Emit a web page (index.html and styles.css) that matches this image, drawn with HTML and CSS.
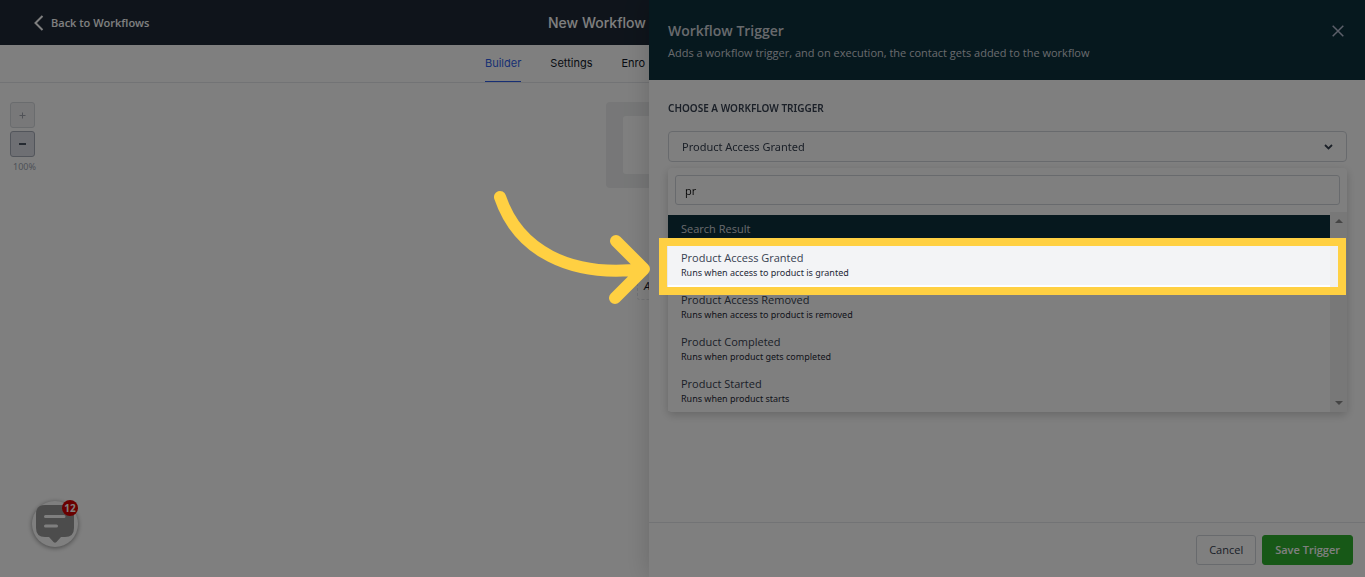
FILE: index.html
```
<!DOCTYPE html>
<html lang="en">
<head>
<meta charset="utf-8">
<title>New Workflow</title>
<link rel="stylesheet" href="styles.css">
</head>
<body>
<div class="app">
  <header class="topbar">
    <a class="back" href="#">
      <svg width="10" height="16" viewBox="0 0 10 16" aria-hidden="true"><path d="M8.500 1 L1.500 8 L8.500 15" fill="none" stroke="currentColor" stroke-width="2"/></svg>
      Back to Workflows
    </a>
    <h1 class="flow-title">New Workflow</h1>
  </header>
  <nav class="tabs">
    <div class="tab-row">
      <a class="tab active" href="#">Builder</a>
      <a class="tab" href="#">Settings</a>
      <a class="tab" href="#">Enro</a>
    </div>
  </nav>
  <main class="canvas">
    <div class="zoom">
      <button class="zoom-btn muted" aria-label="Zoom in"><svg width="7" height="7" viewBox="0 0 7 7"><path d="M3.500 0.500V6.500M0.500 3.500H6.500" stroke="currentColor" fill="none"/></svg></button>
      <button class="zoom-btn" aria-label="Zoom out"><svg width="7" height="2" viewBox="0 0 7 2"><path d="M0 1H7" stroke="currentColor" stroke-width="2"/></svg></button>
      <span class="zoom-level">100%</span>
    </div>
    <div class="flow">
      <div class="node"><div class="node-card"></div></div>
      <button class="add">A</button>
    </div>
  </main>
  <button class="chat" aria-label="Open chat">
    <svg width="38" height="38" viewBox="0 0 38 38" aria-hidden="true"><path d="M9 0H29Q38 0 38 9V23Q38 32 29 32H25L20.500 37Q19 38.500 17.500 37L13 32H9Q0 32 0 23V9Q0 0 9 0Z" fill="#999"/><path d="M9.500 11.500H28M9.500 21H20.500" stroke="#fff" stroke-width="3" stroke-linecap="round"/></svg>
    <span class="badge">12</span>
  </button>
</div>

<aside class="drawer">
  <header class="drawer-head">
    <div>
      <h2>Workflow Trigger</h2>
      <p>Adds a workflow trigger, and on execution, the contact gets added to the workflow</p>
    </div>
    <button class="close" aria-label="Close"><svg width="12" height="12" viewBox="0 0 12 12"><path d="M0.700 0.700L11.300 11.300M11.300 0.700L0.700 11.300" stroke="currentColor" stroke-width="1.500"/></svg></button>
  </header>
  <div class="drawer-body">
    <label class="field-label" for="trigger">CHOOSE A WORKFLOW TRIGGER</label>
    <div class="select-wrap">
      <select id="trigger"><option>Product Access Granted</option></select>
      <svg class="chevron" width="9" height="6" viewBox="0 0 9 6" aria-hidden="true"><path d="M1 1L4.500 4.500L8 1" fill="none" stroke="currentColor" stroke-width="1.800"/></svg>
    </div>
    <div class="dropdown">
      <div class="search"><input type="text" value="pr" aria-label="Search triggers"></div>
      <div class="results">
        <div class="list">
          <h3 class="group">Search Result</h3>
          <button class="option current"><span class="name">Product Access Granted</span><span class="desc">Runs when access to product is granted</span></button>
          <button class="option"><span class="name">Product Access Removed</span><span class="desc">Runs when access to product is removed</span></button>
          <button class="option"><span class="name">Product Completed</span><span class="desc">Runs when product gets completed</span></button>
          <button class="option"><span class="name">Product Started</span><span class="desc">Runs when product starts</span></button>
        </div>
        <div class="rail">
          <svg width="8" height="4" viewBox="0 0 8 4"><path d="M0 4L4 0L8 4Z" fill="currentColor"/></svg>
          <svg width="8" height="4" viewBox="0 0 8 4"><path d="M0 0L4 4L8 0Z" fill="currentColor"/></svg>
        </div>
        <div class="spotlight">
          <svg class="arrow" width="160" height="116" viewBox="0 0 160 116" aria-hidden="true"><path d="M9 9C27 62 78 90 152 81M125 53L153 81L124 110" fill="none" stroke="#ffd042" stroke-width="12" stroke-linecap="round" stroke-linejoin="round"/></svg>
        </div>
      </div>
    </div>
  </div>
  <footer class="drawer-foot">
    <button class="btn">Cancel</button>
    <button class="btn primary">Save Trigger</button>
  </footer>
</aside>
</body>
</html>
```
FILE: styles.css
```
* { box-sizing: border-box; }
body {
  margin: 0;
  height: 100vh;
  overflow: hidden;
  background: #fff;
  color: #374151;
  font: 11px/16px "Open Sans", "Noto Sans", sans-serif;
}
button, input, select { font: inherit; color: inherit; margin: 0; }
h1, h2, h3, p { margin: 0; }
a { color: inherit; text-decoration: none; }
svg { display: block; flex: none; }

.app { display: flex; flex-direction: column; height: 100vh; }
.topbar {
  display: grid;
  grid-template-columns: 1fr auto 1fr;
  align-items: center;
  height: 45px;
  padding: 0 34px;
  background: #1e2937;
  color: #fff;
}
.back { display: flex; align-items: center; gap: 7px; font-weight: 600; }
.flow-title { width: 269px; white-space: nowrap; font: 500 14px/20px Inter, sans-serif; }
.tabs {
  display: flex;
  justify-content: center;
  height: 38px;
  border-bottom: 1px solid #e5e7eb;
  font: 11px/36px Inter, sans-serif;
  color: #111827;
}
.tab-row { display: flex; gap: 29px; width: 395px; }
.tab.active { color: #2f5fe8; border-bottom: 1px solid #2f5fe8; }
.canvas { position: relative; flex: 1; padding: 19px 10px; }
.zoom { position: absolute; top: 19px; left: 10px; display: flex; flex-direction: column; gap: 3px; }
.zoom-btn {
  display: flex;
  align-items: center;
  justify-content: center;
  width: 25px;
  height: 26px;
  padding: 0;
  border: 1px solid #a5abb7;
  border-radius: 3px;
  background: #dcdee6;
  color: #4b5563;
}
.zoom-btn.muted { background: #f0f1f3; border-color: #d5d8dd; color: #a0a5ae; }
.zoom-level { padding-left: 3px; font: 9px/14px "Noto Sans", sans-serif; color: #9ca3af; }
.flow { display: flex; flex-direction: column; align-items: center; gap: 84px; }
.node { width: 153px; padding: 14px 17px; border-radius: 4px; background: #eeeff0; }
.node-card { height: 58px; border-radius: 3px; background: #fff; }
.add {
  width: 91px;
  height: 28px;
  padding: 0 6px;
  border: 1px dashed #e5e7eb;
  border-radius: 3px;
  background: #fff;
  color: #111827;
  font-style: italic;
  text-align: left;
}
.chat {
  position: absolute;
  left: 32px;
  bottom: 30px;
  display: flex;
  justify-content: center;
  width: 46px;
  height: 46px;
  padding: 4px 0 0;
  border: 0;
  border-radius: 50%;
  background: #fff;
  box-shadow: 0 1px 5px rgba(0, 0, 0, .45);
}
.badge {
  position: absolute;
  top: -1px;
  right: 0;
  width: 16px;
  border-radius: 8px;
  background: #d50000;
  color: #fff;
  font: 700 10px/16px "Open Sans", sans-serif;
  text-align: center;
}

.drawer {
  position: fixed;
  top: 0;
  right: 0;
  bottom: 0;
  display: flex;
  flex-direction: column;
  width: 716px;
  max-width: 100%;
  background: #fff;
  box-shadow: 0 0 24px rgba(0, 0, 0, .18);
}
.drawer-head {
  display: flex;
  justify-content: space-between;
  align-items: flex-start;
  height: 80px;
  padding: 21px 21px 0 19px;
  background: #0d303d;
  color: #d1d5db;
}
.drawer-head h2 { margin-bottom: 4px; font-size: 14px; line-height: 20px; font-weight: 600; }
.close { padding: 4px 0; border: 0; background: none; color: #b9bfd4; }
.drawer-body { flex: 1; padding: 20px 18px 0 19px; }
.field-label { display: block; margin-bottom: 15px; font: 600 10px/16px "Noto Sans", sans-serif; color: #374151; }
.select-wrap { position: relative; }
.select-wrap select {
  display: block;
  width: 100%;
  height: 31px;
  padding: 0 13px;
  border: 1px solid #d1d5db;
  border-radius: 4px;
  background: #fff;
  font-family: "Noto Sans", sans-serif;
  appearance: none;
}
.chevron { position: absolute; top: 13px; right: 14px; }
.dropdown { margin-top: 6px; border-radius: 4px; box-shadow: 0 3px 10px rgba(0, 0, 0, .2); }
.search { padding: 7px; }
.search input {
  display: block;
  width: 100%;
  height: 30px;
  padding: 0 9px;
  border: 1px solid #d1d5db;
  border-radius: 3px;
  background: #fff;
  color: #111;
}
.results { position: relative; display: flex; }
.list { flex: 1; padding: 3px 0 1px; }
.group { height: 28px; padding: 0 13px; background: #0d303d; color: #d1d5db; font-size: 11px; line-height: 28px; font-weight: 400; }
.option {
  display: block;
  width: 100%;
  height: 42px;
  padding: 7px 13px 5px;
  border: 0;
  background: #fff;
  text-align: left;
}
.option span { display: block; }
.option.current { background: #f3f4f6; }
.name { line-height: 16px; }
.desc { font: 9px/14px "Noto Sans", sans-serif; color: #1f2937; }
.rail {
  display: flex;
  flex-direction: column;
  justify-content: space-between;
  align-items: center;
  width: 17px;
  padding: 7px 0;
  background: #f1f1f1;
  color: #8a8a8a;
}
/* Highlight frame: its shadow dims everything outside the current option */
.spotlight {
  position: absolute;
  top: 26px;
  left: -9px;
  right: 1px;
  height: 57px;
  border: 8px solid #ffd042;
  box-shadow: 0 0 0 200vmax rgba(0, 0, 0, .5);
  pointer-events: none;
}
.arrow { position: absolute; top: -58px; right: calc(100% + 16px); }
.drawer-foot {
  display: flex;
  justify-content: flex-end;
  gap: 6px;
  padding: 12px 12px 12px 0;
  border-top: 1px solid #e5e7eb;
}
.btn {
  height: 30px;
  padding: 0 12px;
  border: 1px solid #d1d5db;
  border-radius: 3px;
  background: #fff;
  font-weight: 500;
}
.btn.primary { border-color: #2fb12f; background: #2fb12f; color: #fff; font-weight: 600; }
```
